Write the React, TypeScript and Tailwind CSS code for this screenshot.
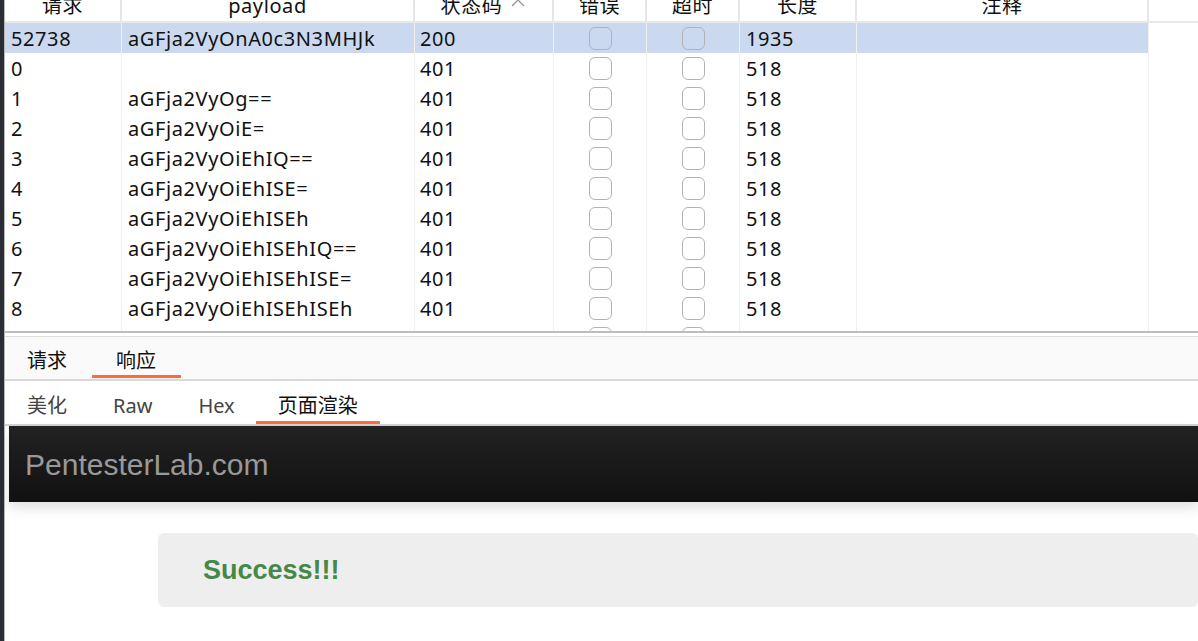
import React from "react";

type Row = { id: string; payload: string; code: string; len: string; sel?: boolean };

const rows: Row[] = [
  { id: "52738", payload: "aGFja2VyOnA0c3N3MHJk", code: "200", len: "1935", sel: true },
  { id: "0", payload: "", code: "401", len: "518" },
  { id: "1", payload: "aGFja2VyOg==", code: "401", len: "518" },
  { id: "2", payload: "aGFja2VyOiE=", code: "401", len: "518" },
  { id: "3", payload: "aGFja2VyOiEhIQ==", code: "401", len: "518" },
  { id: "4", payload: "aGFja2VyOiEhISE=", code: "401", len: "518" },
  { id: "5", payload: "aGFja2VyOiEhISEh", code: "401", len: "518" },
  { id: "6", payload: "aGFja2VyOiEhISEhIQ==", code: "401", len: "518" },
  { id: "7", payload: "aGFja2VyOiEhISEhISE=", code: "401", len: "518" },
  { id: "8", payload: "aGFja2VyOiEhISEhISEh", code: "401", len: "518" },
  { id: "9", payload: "aGFja2VyOiEhISEhISEhIQ==", code: "401", len: "518" },
];

function Check() {
  return <div className="w-[23px] h-[23px] rounded-[6px] border-[1.5px] border-[#b3b3b3]" />;
}

export default function App() {
  const font = { fontFamily: '"Noto Sans", "Noto Sans CJK SC", sans-serif' };
  return (
    <div className="w-[1198px] h-[641px] overflow-hidden flex bg-white text-[#111]" style={font}>
      <div className="w-[4px] shrink-0 bg-[#2b2d35]" />
      <div className="w-px shrink-0 bg-[#b8b8b8]" />
      <div className="flex-1 min-w-0 flex flex-col">
        {/* table */}
        <div className="h-[331px] shrink-0 overflow-hidden text-[20px] tracking-[0.6px]">
          <div className="h-[32px] -mt-[9px] flex border-b-2 border-[#e8e8e8] bg-white">
            <div className="w-[117px] border-r-2 border-[#e6e6e6] flex items-center justify-center">请求</div>
            <div className="w-[293px] border-r-2 border-[#e6e6e6] flex items-center justify-center">payload</div>
            <div className="w-[139px] border-r-2 border-[#e6e6e6] flex items-center justify-center gap-[8px]">
              <span>状态码</span>
              <svg width="16" height="10" viewBox="0 0 16 10" className="mb-[6px]">
                <path d="M2 8 L8 2 L14 8" fill="none" stroke="#9a9a9a" strokeWidth="1.4" />
              </svg>
            </div>
            <div className="w-[93px] border-r-2 border-[#e6e6e6] flex items-center justify-center">错误</div>
            <div className="w-[93px] border-r-2 border-[#e6e6e6] flex items-center justify-center">超时</div>
            <div className="w-[117px] border-r-2 border-[#e6e6e6] flex items-center justify-center">长度</div>
            <div className="w-[292px] border-r-2 border-[#e6e6e6] flex items-center justify-center">注释</div>
            <div className="flex-1" />
          </div>
          {rows.map((r) => (
            <div key={r.id} className="h-[30px] flex">
              <div className={`w-[1144px] flex ${r.sel ? "bg-[#cad9ef]" : "bg-white"}`}>
                <div className="w-[117px] border-r border-[#f0f0f0] pl-[6px] pt-[2px] flex items-center">{r.id}</div>
                <div className="w-[293px] border-r border-[#f0f0f0] pl-[6px] pt-[2px] flex items-center">{r.payload}</div>
                <div className="w-[139px] border-r border-[#f0f0f0] pl-[5px] pt-[2px] flex items-center">{r.code}</div>
                <div className="w-[93px] border-r border-[#f0f0f0] flex items-center justify-center">
                  <Check />
                </div>
                <div className="w-[93px] border-r border-[#f0f0f0] flex items-center justify-center">
                  <Check />
                </div>
                <div className="w-[117px] border-r border-[#f0f0f0] pl-[6px] pt-[2px] flex items-center">{r.len}</div>
                <div className="w-[292px] border-r border-[#f0f0f0]" />
              </div>
              <div className="flex-1 bg-white" />
            </div>
          ))}
        </div>
        <div className="h-[2px] shrink-0 bg-[#bdbdbd]" />
        <div className="h-[3px] shrink-0 bg-white" />
        <div className="h-px shrink-0 bg-[#dedede]" />
        {/* tabs 1 */}
        <div className="h-[42px] shrink-0 bg-[#fafafa] flex items-stretch text-[20px]">
          <div className="-ml-[2px] flex">
            <div className="relative pl-[24px] pr-[25px] pt-[5px] flex items-center">请求</div>
            <div className="relative pl-[24px] pr-[25px] pt-[5px] flex items-center">
              响应
              <div className="absolute left-0 right-0 bottom-[1px] h-[3px] bg-[#ff6a3d]" />
            </div>
          </div>
        </div>
        <div className="h-[2px] shrink-0 bg-[#dadada]" />
        {/* tabs 2 */}
        <div className="h-[43px] shrink-0 bg-white flex text-[20px]">
          <div className="-ml-px flex">
            <div className="relative px-[23px] pt-[6px] flex items-center text-[#444]">美化</div>
            <div className="relative px-[23px] pt-[6px] flex items-center text-[#444]">Raw</div>
            <div className="relative px-[23px] pt-[6px] flex items-center text-[#444]">Hex</div>
            <div className="relative -ml-[2px] px-[22px] pt-[6px] flex items-center text-[#111]">
              页面渲染
              <div className="absolute left-0 right-0 bottom-0 h-[3px] bg-[#ff6a3d]" />
            </div>
          </div>
        </div>
        <div className="h-[2px] shrink-0 bg-[#d4d4d4]" />
        {/* render */}
        <div className="flex-1 bg-white pl-[4px] flex flex-col">
          <div
            className="h-[76px] shrink-0 bg-linear-to-b from-[#222222] to-[#111111] shadow-[0_6px_12px_rgba(0,0,0,0.12)] pl-[16px] pt-[24px] text-[30px] leading-none text-[#999999]"
            style={{ fontFamily: '"Liberation Sans", Arial, sans-serif' }}
          >
            PentesterLab.com
          </div>
          <div
            className="mt-[31px] ml-[149px] h-[74px] rounded-[6px] bg-[#eeeeee] pl-[45px] flex items-center"
            style={{ fontFamily: '"Liberation Sans", Arial, sans-serif' }}
          >
            <span className="text-[27px] font-bold text-[#468847] leading-none">Success!!!</span>
          </div>
        </div>
      </div>
    </div>
  );
}
